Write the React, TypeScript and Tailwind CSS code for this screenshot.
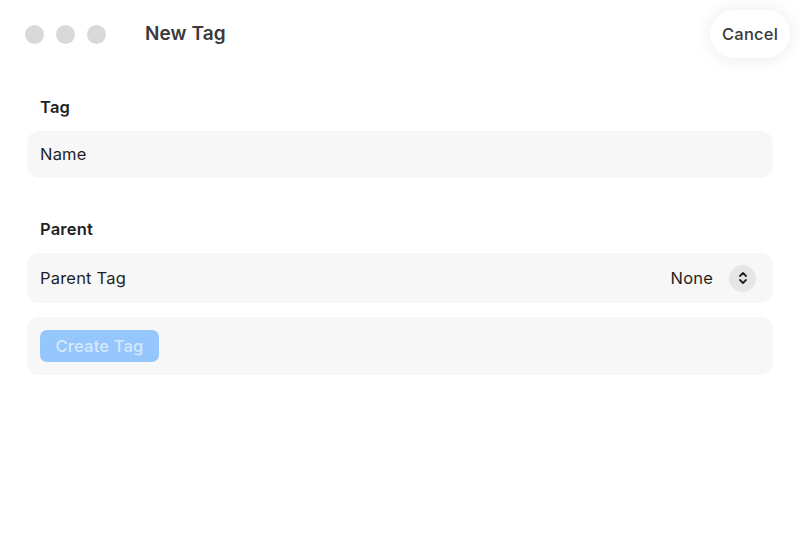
import React from "react";

export default function App() {
  return (
    <div
      className="w-[800px] h-[533px] bg-white overflow-hidden text-[#1f1f1f]"
      style={{ fontFamily: "Inter, 'Noto Sans', sans-serif" }}
    >
      {/* Title bar */}
      <div className="flex items-center h-[68px] pl-[25px] pr-[10px]">
        <div className="flex gap-[12px]">
          <div className="w-[19px] h-[19px] rounded-full bg-[#d9d9d9]" />
          <div className="w-[19px] h-[19px] rounded-full bg-[#d9d9d9]" />
          <div className="w-[19px] h-[19px] rounded-full bg-[#d9d9d9]" />
        </div>
        <div className="ml-[39px] text-[19px] font-semibold text-[#3a3a3a] tracking-[0.1px]">
          New Tag
        </div>
        <div className="ml-auto">
          <button className="h-[48px] px-[12px] rounded-full bg-white shadow-[0_0_18px_rgba(0,0,0,0.09)] text-[16.5px] font-medium text-[#3a3a3a] tracking-[0.2px]">
            Cancel
          </button>
        </div>
      </div>

      <div className="px-[27px] pt-[27px] text-[16.5px] tracking-[0.2px]">
        <div className="pl-[13px] font-semibold leading-[24px]">Tag</div>
        <div className="mt-[12px] h-[47px] rounded-[12px] bg-[#f7f7f7] flex items-center px-[13px]">
          Name
        </div>

        <div className="mt-[39px] pl-[13px] font-semibold leading-[24px]">Parent</div>
        <div className="mt-[12px] h-[50px] rounded-[12px] bg-[#f7f7f7] flex items-center pl-[13px] pr-[17px]">
          <span>Parent Tag</span>
          <span className="ml-auto">None</span>
          <span className="ml-[16px] w-[27px] h-[27px] rounded-full bg-[#e6e6e6] flex items-center justify-center">
            <svg width="12" height="14" viewBox="0 0 12 14" fill="none" stroke="#222" strokeWidth="1.8" strokeLinecap="round" strokeLinejoin="round">
              <path d="M3 5 L6 2 L9 5" />
              <path d="M3 9 L6 12 L9 9" />
            </svg>
          </span>
        </div>

        <div className="mt-[14px] h-[58px] rounded-[12px] bg-[#f7f7f7] flex items-center px-[13px]">
          <button className="h-[32px] w-[119px] rounded-[7px] bg-[#95c6fc] font-medium text-[#d6e9fd]">
            Create Tag
          </button>
        </div>
      </div>
    </div>
  );
}
